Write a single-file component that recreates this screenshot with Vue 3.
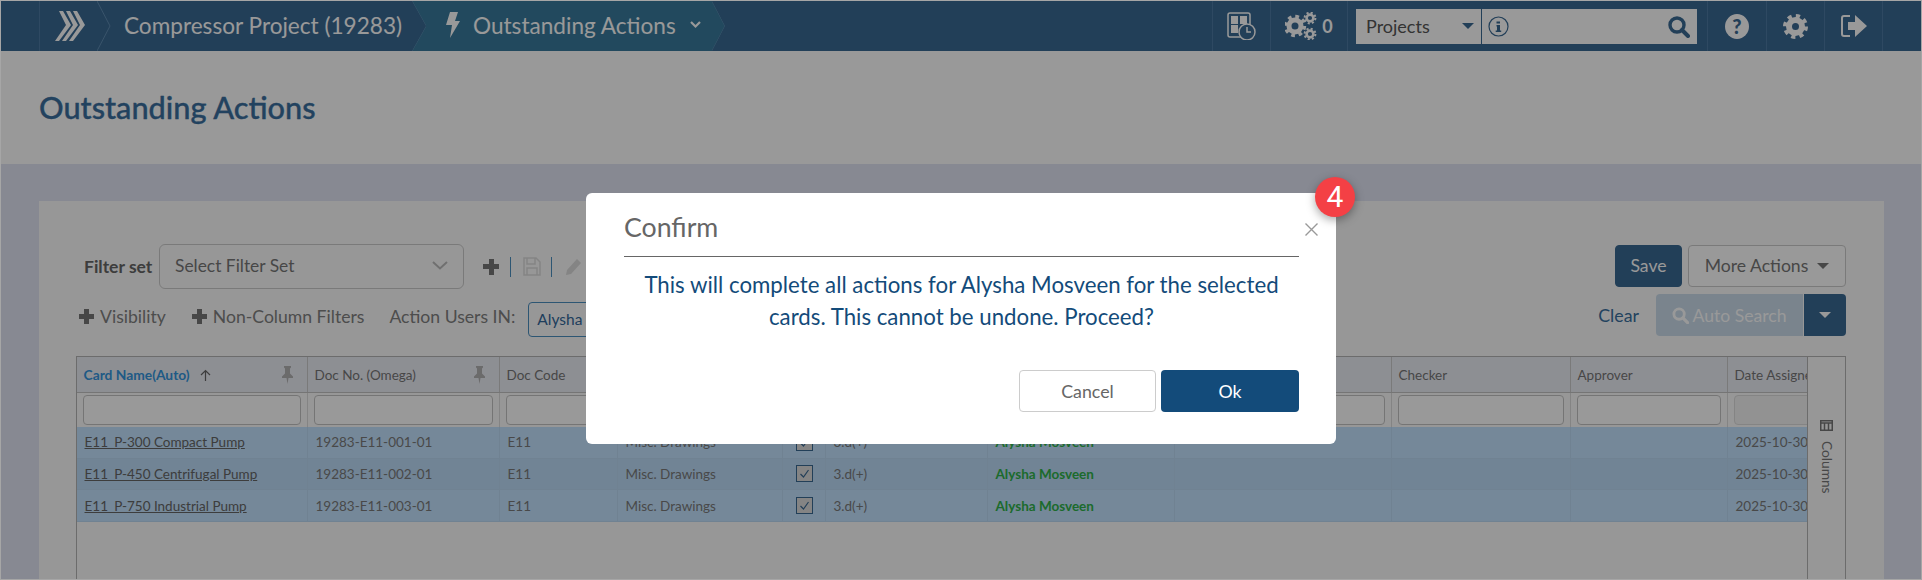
<script setup>
const rows = [
  { name: 'E11_P-300 Compact Pump', no: '19283-E11-001-01' },
  { name: 'E11_P-450 Centrifugal Pump', no: '19283-E11-002-01' },
  { name: 'E11_P-750 Industrial Pump', no: '19283-E11-003-01' },
]
</script>

<template>
  <div class="page">
    <nav class="nav">
      <div class="seg home">
        <svg class="edge" width="14" height="50" viewBox="0 0 14 50"><path d="M0 0 13 25 0 50" /></svg>
        <svg class="logo" width="32" height="30" viewBox="0 0 32 30">
          <path d="M4 0h4l8 14-12 16H0l11-16z" />
          <path d="M11 0h4l8 14-12 16H7l11-16z" />
          <path d="M18 0h4l8 14-12 16h-4l11-16z" />
        </svg>
      </div>
      <div class="seg project">
        <span>Compressor Project (19283)</span>
      </div>
      <div class="seg active">
        <svg class="bolt" width="14" height="26" viewBox="0 0 14 26"><path d="M4 0h8L9 9h5L4 26l2-13H0z" /></svg>
        <span>Outstanding Actions</span>
        <svg class="chev" width="11" height="8" viewBox="0 0 11 8"><path d="M1 1l4.500 4.500L10 1" /></svg>
        <svg class="edge-l" width="14" height="50" viewBox="0 0 14 50"><path d="M0 0 14 25 0 50" /></svg>
        <svg class="edge-r" width="14" height="50" viewBox="0 0 14 50"><path d="M0 0 13 25 0 50" /></svg>
      </div>
      <div class="nav-right">
        <div class="nbtn w58">
          <svg width="29" height="28" viewBox="0 0 29 28">
            <rect x="1" y="1" width="22" height="24" rx="2" class="ol" />
            <rect x="4" y="4" width="7" height="8" class="fl" />
            <rect x="13" y="4" width="7" height="8" class="fl" />
            <rect x="4" y="13" width="7" height="8" class="fl" />
            <circle cx="20" cy="20" r="8" class="clock" />
            <path d="M20 15v5h4" class="ol" />
          </svg>
        </div>
        <div class="nbtn w77">
          <svg width="32" height="28" viewBox="0 0 32 28">
            <circle cx="10" cy="14" r="6" class="gear" stroke-width="5" />
            <circle cx="10" cy="14" r="9.5" class="teeth" stroke-width="3.4" stroke-dasharray="3.7 3.76" />
            <circle cx="25" cy="6" r="3.4" class="gear" stroke-width="2.6" />
            <circle cx="25" cy="6" r="5.4" class="teeth" stroke-width="2" stroke-dasharray="2.1 2.14" />
            <circle cx="25" cy="22" r="3.4" class="gear" stroke-width="2.6" />
            <circle cx="25" cy="22" r="5.4" class="teeth" stroke-width="2" stroke-dasharray="2.1 2.14" />
          </svg>
          <span class="zero">0</span>
        </div>
        <div class="nsearch">
          <div class="nselect"><span>Projects</span><i class="caret dark"></i></div>
          <div class="ninput">
            <svg width="21" height="21" viewBox="0 0 21 21">
              <circle cx="10.5" cy="10.5" r="9.5" fill="none" stroke="#3a6993" stroke-width="1.2" />
              <path d="M8.5 5.5h3.5v2H8.5zM8.5 9h3.5v5.5h1.2V16H7.7v-1.5h1.3V10.500H8.500z" fill="#3a6993" />
            </svg>
            <svg width="22" height="22" viewBox="0 0 22 22">
              <circle cx="9" cy="9" r="7" fill="none" stroke="#3a6993" stroke-width="3.4" />
              <path d="M14 14l6 6" stroke="#3a6993" stroke-width="4" stroke-linecap="round" />
            </svg>
          </div>
        </div>
        <div class="nbtn w59"><span class="qmark">?</span></div>
        <div class="nbtn w58">
          <svg width="25" height="25" viewBox="0 0 25 25">
            <circle cx="12.500" cy="12.500" r="6.500" class="gear" stroke-width="6" />
            <circle cx="12.500" cy="12.500" r="10.500" class="teeth" stroke-width="4" stroke-dasharray="4.120 4.130" />
          </svg>
        </div>
        <div class="nbtn w59 last">
          <svg width="26" height="24" viewBox="0 0 26 24">
            <path d="M9 2H3a2 2 0 0 0-2 2v16a2 2 0 0 0 2 2h6" class="ol2" />
            <path d="M7 8h7V1l12 11-12 11v-7H7z" class="fl" />
          </svg>
        </div>
      </div>
    </nav>

    <header class="title"><h1>Outstanding Actions</h1></header>

    <main class="band">
      <section class="card">
        <div class="bar one">
          <span class="lbl">Filter set</span>
          <div class="fselect">
            <span>Select Filter Set</span>
            <svg width="16" height="9" viewBox="0 0 16 9"><path d="M1 1l7 6.500L15 1" /></svg>
          </div>
          <i class="plus big"></i>
          <i class="vsep"></i>
          <svg class="disabled" width="18" height="19" viewBox="0 0 18 19">
            <path d="M1 1h12l4 4v13H1zM4 1v6h8V1M4 18v-7h10v7" />
          </svg>
          <i class="vsep second"></i>
          <svg class="pencil" width="17" height="18" viewBox="0 0 17 18"><path d="M12 1l4 4L6 16l-5 1 1-5z" /></svg>
          <div class="right">
            <button class="btn save">Save</button>
            <button class="btn more">More Actions<i class="caret grey"></i></button>
          </div>
        </div>

        <div class="bar two">
          <span class="tool"><i class="plus"></i>Visibility</span>
          <span class="tool t2"><i class="plus"></i>Non-Column Filters</span>
          <span class="tool t3">Action Users IN:</span>
          <span class="chip">Alysha Mosveen</span>
          <div class="right">
            <span class="clear">Clear</span>
            <button class="btn auto">
              <svg width="17" height="17" viewBox="0 0 18 18">
                <circle cx="7.500" cy="7.500" r="5.500" fill="none" stroke="#fff" stroke-width="3" />
                <path d="M11.500 11.500l5 5" stroke="#fff" stroke-width="3.400" stroke-linecap="round" />
              </svg>
              Auto Search
            </button>
            <button class="btn drop"><i class="caret white"></i></button>
          </div>
        </div>

        <div class="grid-wrap">
          <div class="grid-scroll">
            <div class="tr head">
              <div class="th sorted">
                <span>Card Name(Auto)</span>
                <svg class="arrow" width="11" height="12" viewBox="0 0 11 12"><path d="M5.500 12V1.500M1 6l4.500-4.500L10 6" /></svg>
                <svg class="pin" width="13" height="18" viewBox="0 0 13 18"><path d="M3 0h7v1.500L9 2.500v5l3 3V12H7.500l-1 6-1-6H1v-1.500l3-3v-5L3 1.500z" /></svg>
              </div>
              <div class="th">
                <span>Doc No. (Omega)</span>
                <svg class="pin" width="13" height="18" viewBox="0 0 13 18"><path d="M3 0h7v1.500L9 2.500v5l3 3V12H7.500l-1 6-1-6H1v-1.500l3-3v-5L3 1.500z" /></svg>
              </div>
              <div class="th"><span>Doc Code</span></div>
              <div class="th"></div><div class="th"></div><div class="th"></div><div class="th"></div><div class="th"></div>
              <div class="th"><span>Checker</span></div>
              <div class="th"><span>Approver</span></div>
              <div class="th"><span>Date Assigned</span></div>
            </div>
            <div class="tr filters">
              <div v-for="n in 10" :key="n" class="fc"><div class="finput"></div></div>
              <div class="fc"><div class="finput off"></div></div>
            </div>
            <div v-for="r in rows" :key="r.no" class="tr body">
              <div class="td"><a class="link">{{ r.name }}</a></div>
              <div class="td">{{ r.no }}</div>
              <div class="td">E11</div>
              <div class="td">Misc. Drawings</div>
              <div class="td box">
                <svg width="17" height="17" viewBox="0 0 17 17">
                  <rect x=".5" y=".5" width="16" height="16" fill="#ddd" stroke="#3a6993" />
                  <path d="M4.500 9l3 3 5-7" fill="none" stroke="#3a6993" stroke-width="1.200" />
                </svg>
              </div>
              <div class="td">3.d(+)</div>
              <div class="td user">Alysha Mosveen</div>
              <div class="td"></div><div class="td"></div><div class="td"></div>
              <div class="td">2025-10-30</div>
            </div>
          </div>
          <aside class="tab">
            <span class="tab-in">
              <svg width="13" height="11" viewBox="0 0 13 11"><path d="M.75.750h11.500v9.500H.75zM.75 3h11.500M4.500 3v7.250M8.500 3v7.250" /></svg>
              <span class="tab-txt">Columns</span>
            </span>
          </aside>
        </div>
      </section>
    </main>

    <div class="dim"></div>

    <div class="modal" role="dialog">
      <div class="m-head">
        <span>Confirm</span>
        <svg width="13" height="13" viewBox="0 0 13 13"><path d="M.5.500l12 12M12.500.500l-12 12" /></svg>
      </div>
      <p class="m-body">This will complete all actions for Alysha Mosveen for the selected cards. This cannot be undone. Proceed?</p>
      <div class="m-foot">
        <button class="m-btn cancel">Cancel</button>
        <button class="m-btn ok">Ok</button>
      </div>
    </div>
    <div class="badge">4</div>
  </div>
</template>

<style>
html, body { margin: 0; padding: 0; }
</style>

<style scoped>
* { box-sizing: border-box; }
.page {
  position: relative;
  width: 1922px;
  height: 580px;
  overflow: hidden;
  border: 1px solid #a6a6a6;
  display: flex;
  flex-direction: column;
  font-family: Lato, "Liberation Sans", sans-serif;
  background: #e1e5f3;
}

/* nav */
.nav { height: 50px; flex: none; display: flex; background: #3a6993; color: #fff; }
.seg { position: relative; height: 50px; display: flex; align-items: center; font-size: 22.6px; padding-bottom: 2px; }
.seg svg path { fill: none; }
.home { margin-left: 38px; width: 58px; border-left: 1px solid #4d7aa3; padding-left: 15px; padding-bottom: 0; }
.home .edge { position: absolute; left: 57px; top: 0; }
.edge path, .edge-l path, .edge-r path { stroke: #5f8cb2; stroke-width: 1; }
.home .logo path { fill: #fff; stroke: none; }
.project { width: 315px; padding-left: 27px; }
.active {
  width: 313px;
  padding-left: 34px;
  background: #3a7b9d;
  clip-path: polygon(0 0, 300px 0, 313px 50%, 300px 100%, 0 100%, 14px 50%);
}
.active .bolt path { fill: #fff; }
.active .bolt { margin-right: 13px; }
.active .chev { margin-left: 14px; }
.active .chev path { stroke: #fff; stroke-width: 2.200; }
.edge-l { position: absolute; left: 0; top: 0; }
.edge-r { position: absolute; left: 300px; top: 0; }
.nav-right { margin-left: auto; margin-right: 38px; display: flex; height: 50px; }
.nbtn {
  height: 50px;
  display: flex;
  align-items: center;
  justify-content: center;
  border-left: 1px solid #4d7aa3;
}
.w58 { width: 58px; }
.w59 { width: 59px; }
.w77 { width: 77px; gap: 5px; }
.last { border-right: 1px solid #4d7aa3; }
.ol { fill: none; stroke: #fff; stroke-width: 1.500; }
.ol2 { fill: none; stroke: #fff; stroke-width: 2; }
.fl { fill: #fff; }
.clock { fill: #3a6993; stroke: #fff; stroke-width: 1.500; }
.gear, .teeth { fill: none; stroke: #fff; }
.zero { font-size: 18px; font-weight: 700; }
.nsearch { width: 360px; border-left: 1px solid #4d7aa3; display: flex; padding: 8px 0 0 8px; gap: 1px; }
.nselect, .ninput { height: 35px; background: #fff; display: flex; align-items: center; justify-content: space-between; }
.nselect { width: 125px; padding: 0 7px 2px 10px; color: #555; font-size: 18px; }
.ninput { width: 215px; padding: 0 7px 0 6px; }
.caret { display: block; width: 0; height: 0; border-left: 6px solid transparent; border-right: 6px solid transparent; border-top: 6px solid #777; }
.caret.dark { border-top-color: #3a6993; }
.caret.white { border-top-color: #fff; }
.qmark {
  width: 24px;
  height: 25px;
  border-radius: 50%;
  background: #fff;
  color: #3a6993;
  font-size: 20px;
  font-weight: 900;
  line-height: 25px;
  text-align: center;
}

/* title */
.title { height: 113px; flex: none; background: #fff; padding: 0 0 0 38px; display: flex; align-items: center; }
h1 { margin: 0; font-size: 30.700px; font-weight: 500; color: #3a6f9e; -webkit-text-stroke: .35px #3a6f9e; }

/* band + card */
.band { flex: 1; min-height: 0; padding: 37px 37px 0 38px; }
.card { height: 100%; background: #fcfcfc; padding: 43px 38px 0 37px; display: flex; flex-direction: column; }
.bar { display: flex; flex: none; }
.right { margin-left: auto; display: flex; align-items: center; }
.one { height: 45px; align-items: center; color: #777; }
.lbl { margin-left: 8px; font-size: 17.500px; font-weight: 700; color: #666; width: 67px; white-space: nowrap; }
.fselect {
  margin-left: 8px;
  width: 305px;
  height: 45px;
  border: 1px solid #ccc;
  border-radius: 6px;
  display: flex;
  align-items: center;
  justify-content: space-between;
  padding: 0 15px 2px;
  font-size: 17.400px;
  color: #777;
}
.fselect svg path { fill: none; stroke: #bbb; stroke-width: 2; }
.plus {
  display: inline-block;
  width: 15px;
  height: 15px;
  background:
    linear-gradient(#777, #777) center / 100% 5px no-repeat,
    linear-gradient(#777, #777) center / 5px 100% no-repeat;
}
.plus.big { width: 16px; height: 16px; margin-left: 19px; }
.vsep { width: 1px; height: 20px; background: #4c8fc0; margin-left: 11px; }
.vsep.second { margin-left: 10px; }
.disabled { margin-left: 12px; }
.disabled path { fill: none; stroke: #dcdcdc; stroke-width: 1.500; }
.pencil { margin-left: 13px; }
.pencil path { fill: #dcdcdc; }
.btn { font-family: inherit; font-size: 17.600px; height: 42px; border-radius: 4px; border: 1px solid #ccc; }
.one .right { margin-top: -2px; gap: 6px; }
.save { width: 67px; background: #3a6993; border-color: #3a6993; color: #fff; padding: 0; }
.more { width: 158px; background: #fff; color: #777; display: flex; align-items: center; justify-content: center; gap: 9px; padding: 0; }
.two { height: 43px; margin-top: 5px; position: relative; }
.tool { display: flex; align-items: center; gap: 6px; height: 35px; margin-top: 5px; font-size: 17.600px; color: #808080; white-space: nowrap; }
.tool:first-child { margin-left: 3px; }
.t2 { margin-left: 26px; }
.t3 { margin-left: 25px; }
.chip {
  margin-left: 13px;
  margin-top: 8px;
  width: 130px;
  height: 35px;
  border: 1px solid #4c8fc0;
  border-radius: 4px;
  padding-left: 8px;
  line-height: 33px;
  font-size: 15.500px;
  color: #34689a;
  white-space: nowrap;
}
.two .right { align-items: flex-start; }
.clear { font-size: 17.800px; color: #3a6f9e; margin-right: 17px; line-height: 42px; }
.auto {
  width: 147px;
  background: #cbdcec;
  border: none;
  border-radius: 4px 0 0 4px;
  color: #fff;
  display: flex;
  align-items: center;
  justify-content: center;
  gap: 3px;
  padding: 0;
}
.drop {
  width: 42px;
  margin-left: 1px;
  background: #3a6993;
  border: none;
  border-radius: 0 4px 4px 0;
  display: flex;
  align-items: center;
  justify-content: center;
  padding: 0;
}

/* grid */
.grid-wrap {
  margin-top: 19px;
  flex: 1;
  min-height: 0;
  display: flex;
  border: 1px solid #b5b5b5;
  border-bottom: none;
}
.grid-scroll { flex: 1; min-width: 0; overflow: hidden; }
.tr {
  display: grid;
  grid-template-columns: 231px 192px 118px 165px 43px 162px 187px 217px 179px 157px 150px;
  width: 1801px;
}
.head { height: 36px; background: #eceef6; border-bottom: 1px solid #c4c4c4; }
.th {
  position: relative;
  border-right: 1px solid #ccc;
  display: flex;
  align-items: center;
  padding-left: 6.500px;
  font-size: 13.500px;
  color: #777;
  white-space: nowrap;
  overflow: hidden;
}
.sorted { font-weight: 700; color: #3496de; font-size: 13.800px; }
.arrow { margin-left: 10px; }
.arrow path { fill: none; stroke: #666; stroke-width: 1.200; }
.pin { position: absolute; right: 13px; top: 9px; }
.pin path { fill: #b3b3b3; }
.filters { height: 34px; background: #fcfcfc; }
.fc { border-right: 1px solid #ddd; padding: 2px 6px 2px 6px; }
.finput { height: 30px; width: 100%; background: #fff; border: 1px solid #c4c4c4; border-radius: 4px; }
.finput.off { background: #f3f3f3; border-color: #ddd; }
.body { height: 31.670px; background: #c3e3ff; font-size: 13.500px; color: #7a7a7a; }
.body:nth-child(4) { background: #bcdcf8; }
.td {
  display: flex;
  align-items: center;
  padding-left: 7.500px;
  border-right: 1px solid #bbd9f3;
  border-bottom: 1px solid #bbd9f3;
  white-space: nowrap;
  overflow: hidden;
}
.box { padding-left: 13px; }
.link { color: #666; text-decoration: underline; }
.user { color: #2fb24a; font-weight: 700; }
.tab { width: 38px; flex: none; border-left: 1px solid #b5b5b5; background: #fcfcfc; padding-top: 63px; }
.tab-in {
  display: flex;
  flex-direction: column;
  align-items: center;
  gap: 10px;
  font-size: 13.700px;
  color: #777;
}
.tab-txt { writing-mode: vertical-rl; line-height: 14px; }
.tab-in svg path { fill: none; stroke: #777; stroke-width: 1.500; }

/* overlay */
.dim { position: absolute; inset: 0; background: rgba(0, 0, 0, .4); }
.modal {
  position: absolute;
  left: 585px;
  top: 192px;
  width: 750px;
  height: 251px;
  background: #fff;
  border-radius: 6px;
  padding: 0 37px 0 38px;
  display: flex;
  flex-direction: column;
}
.m-head {
  height: 64px;
  padding-top: 4px;
  border-bottom: 1px solid #666;
  display: flex;
  align-items: center;
  justify-content: space-between;
  font-size: 26.700px;
  color: #666;
  position: relative;
}
.m-head svg { position: absolute; right: -19px; top: 30px; }
.m-head svg path { fill: none; stroke: #999; stroke-width: 1.400; }
.m-body {
  margin: 12px 0 0;
  text-align: center;
  font-size: 22.250px;
  line-height: 32px;
  color: #134b7a;
}
.m-foot { margin-top: 37px; display: flex; justify-content: flex-end; gap: 5px; }
.m-btn { height: 42px; font-family: inherit; font-size: 17.800px; border-radius: 4px; padding: 0; }
.cancel { width: 137px; background: #fff; border: 1px solid #ccc; color: #666; }
.ok { width: 138px; background: #134b7a; border: none; color: #fff; }
.badge {
  position: absolute;
  left: 1314px;
  top: 176px;
  width: 40px;
  height: 40px;
  border-radius: 50%;
  background: #f44045;
  color: #fff;
  font-family: Roboto, sans-serif;
  font-size: 30px;
  line-height: 40px;
  text-align: center;
  box-shadow: 0 3px 10px rgba(0, 0, 0, .35);
}
</style>
